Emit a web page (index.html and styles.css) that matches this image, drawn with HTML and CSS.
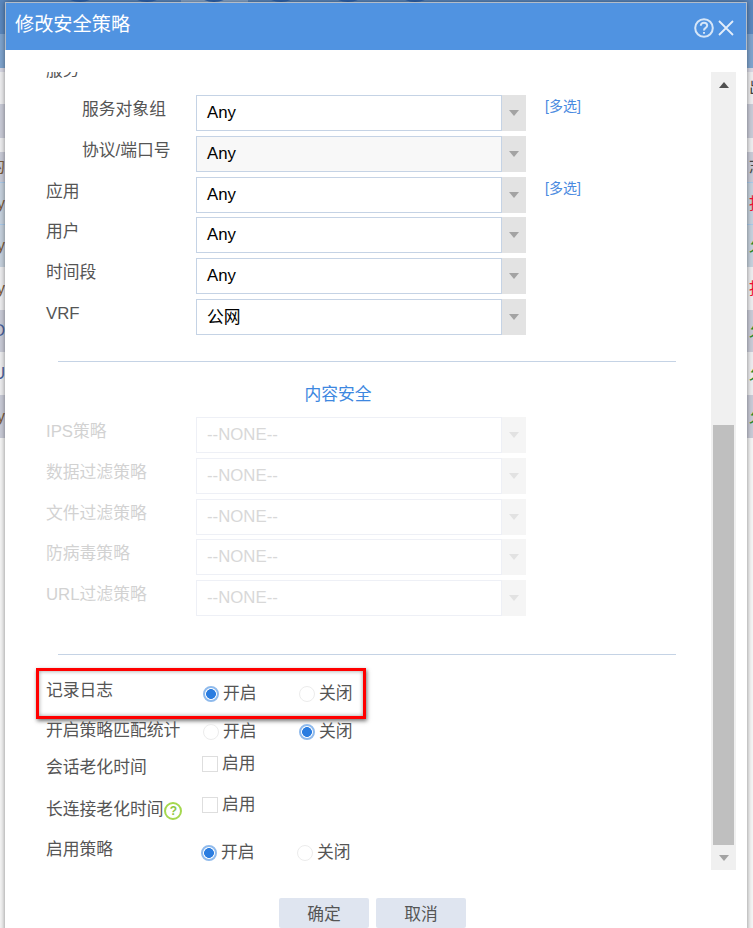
FILE: index.html
```html
<!DOCTYPE html>
<html lang="zh-CN">
<head>
<meta charset="utf-8">
<title>修改安全策略</title>
<link rel="stylesheet" href="styles.css">
</head>
<body>
<div class="page">
  <div class="band nav-top"><i></i><i></i><i class="on"></i><i></i><i></i><i></i></div>
  <div class="band nav-sub"></div>
  <div class="band b4 grey-l"></div>
  <div class="band b32 light"><span></span><span class="c-dark">出</span></div>
  <div class="band b34 grey"></div>
  <div class="band b14 light"></div>
  <div class="band b30 grey"><span class="c-brown">的</span><span class="c-dark">志</span></div>
  <div class="band b42 blue"><span class="c-brown">y</span><span class="c-red">拒绝</span></div>
  <div class="band b43 blue"><span class="c-brown">y</span><span class="c-green">允许</span></div>
  <div class="band b43 light"><span class="c-brown">y</span><span class="c-red">拒绝</span></div>
  <div class="band b42 grey"><span class="c-navy">D</span><span class="c-green">允许</span></div>
  <div class="band b43 light"><span class="c-navy">U</span><span class="c-green">允许</span></div>
  <div class="band b43 grey"><span class="c-brown">y</span><span class="c-green">允许</span></div>

  <section class="modal">
    <header class="modal-head">
      <h1 class="modal-title">修改安全策略</h1>
      <div class="head-icons">
        <svg class="icon-help" viewBox="0 0 20 20" width="20" height="20">
          <circle cx="10" cy="10" r="8.8"/>
          <path d="M6.8 7.8C6.8 5.9 8.2 4.8 10 4.8s3.2 1.1 3.2 2.8c0 1.4-.9 2-1.8 2.6-.9.6-1.4 1.1-1.4 2.2"/>
          <path d="M10 14v1.8"/>
        </svg>
        <svg class="icon-close" viewBox="0 0 16 16" width="16" height="16">
          <path d="M1 1l14 14M15 1L1 15"/>
        </svg>
      </div>
    </header>
    <div class="modal-body">
      <div class="scroll-view">
        <div class="form">
          <div class="heading-row">服务</div>
          <div class="fields">
            <div class="field sub"><label class="lbl">服务对象组</label><div class="select"><div class="value">Any</div><div class="arrow"><b></b></div></div><a class="multi">[多选]</a></div>
            <div class="field sub"><label class="lbl">协议/端口号</label><div class="select readonly"><div class="value">Any</div><div class="arrow"><b></b></div></div></div>
            <div class="field"><label class="lbl">应用</label><div class="select"><div class="value">Any</div><div class="arrow"><b></b></div></div><a class="multi">[多选]</a></div>
            <div class="field"><label class="lbl">用户</label><div class="select"><div class="value">Any</div><div class="arrow"><b></b></div></div></div>
            <div class="field"><label class="lbl">时间段</label><div class="select"><div class="value">Any</div><div class="arrow"><b></b></div></div></div>
            <div class="field"><label class="lbl">VRF</label><div class="select"><div class="value cjk">公网</div><div class="arrow"><b></b></div></div></div>
          </div>
          <hr class="rule rule-a">
          <div class="section-title">内容安全</div>
          <div class="fields disabled">
            <div class="field"><label class="lbl">IPS策略</label><div class="select"><div class="value">--NONE--</div><div class="arrow"><b></b></div></div></div>
            <div class="field"><label class="lbl">数据过滤策略</label><div class="select"><div class="value">--NONE--</div><div class="arrow"><b></b></div></div></div>
            <div class="field"><label class="lbl">文件过滤策略</label><div class="select"><div class="value">--NONE--</div><div class="arrow"><b></b></div></div></div>
            <div class="field"><label class="lbl">防病毒策略</label><div class="select"><div class="value">--NONE--</div><div class="arrow"><b></b></div></div></div>
            <div class="field"><label class="lbl">URL过滤策略</label><div class="select"><div class="value">--NONE--</div><div class="arrow"><b></b></div></div></div>
          </div>
          <hr class="rule rule-b">
          <div class="opt opt-1">
            <label class="lbl">记录日志</label>
            <div class="ctl ctl-1"><span class="radio on"></span><span class="txt">开启</span><span class="radio second"></span><span class="txt">关闭</span></div>
            <div class="mark"></div>
          </div>
          <div class="opt opt-2">
            <label class="lbl">开启策略匹配统计</label>
            <div class="ctl ctl-2"><span class="radio"></span><span class="txt">开启</span><span class="radio on second"></span><span class="txt">关闭</span></div>
          </div>
          <div class="opt opt-3">
            <label class="lbl">会话老化时间</label>
            <div class="ctl ctl-3"><span class="check"></span><span class="txt">启用</span></div>
          </div>
          <div class="opt opt-4">
            <label class="lbl">长连接老化时间<span class="hint">?</span></label>
            <div class="ctl ctl-4"><span class="check"></span><span class="txt">启用</span></div>
          </div>
          <div class="opt opt-5">
            <label class="lbl">启用策略</label>
            <div class="ctl ctl-5"><span class="radio on"></span><span class="txt">开启</span><span class="radio second"></span><span class="txt">关闭</span></div>
          </div>
        </div>
        <div class="scrollbar">
          <div class="sb-btn"><b class="up"></b></div>
          <div class="sb-thumb"></div>
          <div class="sb-btn"><b class="down"></b></div>
        </div>
      </div>
      <div class="actions">
        <button class="btn">确定</button>
        <button class="btn">取消</button>
      </div>
    </div>
  </section>
</div>
</body>
</html>
```
FILE: styles.css
```css
* { box-sizing: border-box; }
html, body { margin: 0; padding: 0; }
body { font-family: "Liberation Sans", "Noto Sans CJK SC", sans-serif; color: #555; background: #f4f4f4; }
.page { position: relative; width: 753px; height: 928px; overflow: hidden; }

/* page behind the dialog */
.band { display: flex; justify-content: space-between; align-items: center; font-size: 16px; line-height: 20px; overflow: hidden; }
.band span { display: block; width: 6px; white-space: nowrap; overflow: hidden; }
.band span:first-child { padding-left: 0; width: 5px; direction: rtl; }
.band span:last-child { padding-left: 2px; }
.nav-top { height: 34px; background: #5a87bd; padding-left: 47px; justify-content: flex-start; align-items: flex-start; }
.nav-top i { display: block; width: 67px; height: 3px; position: relative; overflow: hidden; }
.nav-top i::before { content: ""; position: absolute; left: 20px; top: -10px; width: 26px; height: 12px; border-radius: 50%; background: #2c62ad; }
.nav-top i.on { background: #86a6cc; }
.nav-sub { height: 34px; background: #7ea3cd; }
.b4 { height: 4px; }
.b14 { height: 14px; }
.b30 { height: 30px; }
.b32 { height: 32px; }
.b34 { height: 34px; }
.b42 { height: 42px; }
.b43 { height: 43px; }
.grey-l { background: #d6d6e2; }
.light { background: #ececee; }
.grey { background: #c8cad6; }
.blue { background: #c5d0dc; border-top: 1px solid #a8c8e8; }
.c-dark { color: #444; }
.c-brown { color: #7a5a3a; }
.c-navy { color: #4a5f9a; }
.c-red { color: #f01030; }
.c-green { color: #2a8a2a; }

/* dialog */
.modal { position: absolute; left: 5px; top: 2px; width: 742px; height: 940px; background: #fff; box-shadow: 0 0 5px rgba(0, 0, 0, .45); }
.modal-head { height: 48px; background: #5093e1; border: 1px solid #b3bcc8; border-bottom: 0; display: flex; justify-content: space-between; align-items: flex-start; padding-left: 9px; }
.modal-title { margin: 0; font-size: 19.2px; font-weight: 400; line-height: 30px; padding-top: 7px; color: #fff; }
.head-icons { display: flex; align-items: center; gap: 4px; padding: 15px 12px 0 0; }
.icon-help { fill: none; stroke: #d6e6f8; stroke-width: 2; display: block; }
.icon-close { fill: none; stroke: #e2edfa; stroke-width: 1.8; display: block; }
.modal-body { padding-top: 22px; }
.scroll-view { display: flex; height: 798px; overflow: hidden; }
.form { width: 706px; padding-left: 41px; }
.heading-row { font-size: 16.8px; line-height: 30px; height: 28px; margin: -16px 0 11px; }

.fields { display: flex; flex-direction: column; gap: 4.8px; }
.field { display: flex; align-items: flex-start; height: 36px; }
.lbl { display: block; flex: none; font-size: 16.8px; line-height: 29px; width: 150px; white-space: nowrap; }
.sub .lbl { padding-left: 36px; }
.select { width: 330px; height: 36px; display: flex; flex: none; }
.value { flex: 1; border: 1px solid #c5d3e5; padding-left: 10px; font-size: 16.8px; line-height: 33px; color: #000; background: #fff; }
.value.cjk { line-height: 35px; }
.readonly .value { background: #f8f8f8; }
.arrow { width: 24px; background: #e3e3e3; display: flex; align-items: center; justify-content: center; }
.arrow b { display: block; width: 0; height: 0; border: 5.5px solid transparent; border-top: 6px solid #a3a3a3; border-bottom: 0; }
.multi { font-size: 14px; line-height: 20px; color: #4a8ae0; margin: 1px 0 0 19px; white-space: nowrap; }

.disabled .lbl { color: #d2d2d2; }
.disabled .value { color: #d8d8d8; border-color: #eef0f6; background: #fff; }
.disabled .arrow { background: #f5f5f5; }
.disabled .arrow b { border-top-color: #e2e2e2; }

.rule { border: 0; height: 1px; background: #c5d3e5; margin: 0 0 0 12px; width: 618px; }
.rule-a { margin-top: 26px; }
.rule-b { margin-top: 38px; }
.section-title { margin: 19px 0 8px -41px; width: 666px; text-align: center; font-size: 16.8px; line-height: 28px; color: #3d87e0; }

.opt { display: flex; align-items: flex-start; position: relative; }
.opt .lbl { width: 157px; line-height: 30px; }
.opt-1 { margin-top: 21px; height: 40px; }
.opt-2 { height: 37px; }
.opt-3 { height: 42px; }
.opt-4 { height: 40px; }
.opt-5 { height: 28px; }
.ctl { display: flex; align-items: center; height: 24px; font-size: 16.8px; line-height: 24px; }
.ctl-1 { margin-top: 6px; }
.ctl-2 { margin-top: 4px; }
.ctl-3 { margin-top: -1px; margin-left: -1px; }
.ctl-4 { margin-top: -2px; margin-left: -1px; }
.ctl-5 { margin-top: 6px; margin-left: -2px; }
.txt { margin-left: 4px; white-space: nowrap; }
.radio { width: 16px; height: 16px; border-radius: 50%; border: 1.5px solid #ececec; background: #fff; flex: none; }
.radio.second { margin-left: 42.4px; }
.radio.on { border: 2px solid #8fbaec; background: radial-gradient(circle, #2b7de0 0, #2b7de0 4.6px, #fff 5.2px); }
.check { width: 16px; height: 16px; border: 1.5px solid #dedede; background: #fff; flex: none; }
.hint { display: inline-block; width: 18px; height: 18px; margin-left: 1px; border: 2px solid #a5d84f; border-radius: 50%; color: #8cc63f; font-size: 12px; line-height: 14px; font-weight: 700; text-align: center; vertical-align: 0; }
.mark { position: absolute; left: -10px; top: -8px; width: 330px; height: 51px; border: 3px solid #f00; box-shadow: 1px 2px 4px rgba(0, 0, 0, .55), inset 0 0 4px rgba(0, 0, 0, .4); }

.scrollbar { width: 25px; height: 798px; background: #f0f0f0; display: flex; flex-direction: column; padding: 0 2px; }
.sb-btn { height: 25px; display: flex; align-items: center; justify-content: center; flex: none; }
.sb-btn:first-child { margin-bottom: 328px; }
.sb-thumb { height: 420px; flex: none; background: #bfbfbf; }
.up { display: block; width: 0; height: 0; border: 5.5px solid transparent; border-bottom: 6px solid #505050; border-top: 0; }
.down { display: block; width: 0; height: 0; border: 5.5px solid transparent; border-top: 6px solid #a3a3a3; border-bottom: 0; }

.actions { display: flex; gap: 7px; margin: 28px 0 0 274px; }
.btn { width: 90px; height: 30px; border: 0; border-radius: 2px; background: #dfe5f0; color: #555; font-family: inherit; font-size: 16.8px; line-height: 30px; padding: 2px 0 0; }
```
